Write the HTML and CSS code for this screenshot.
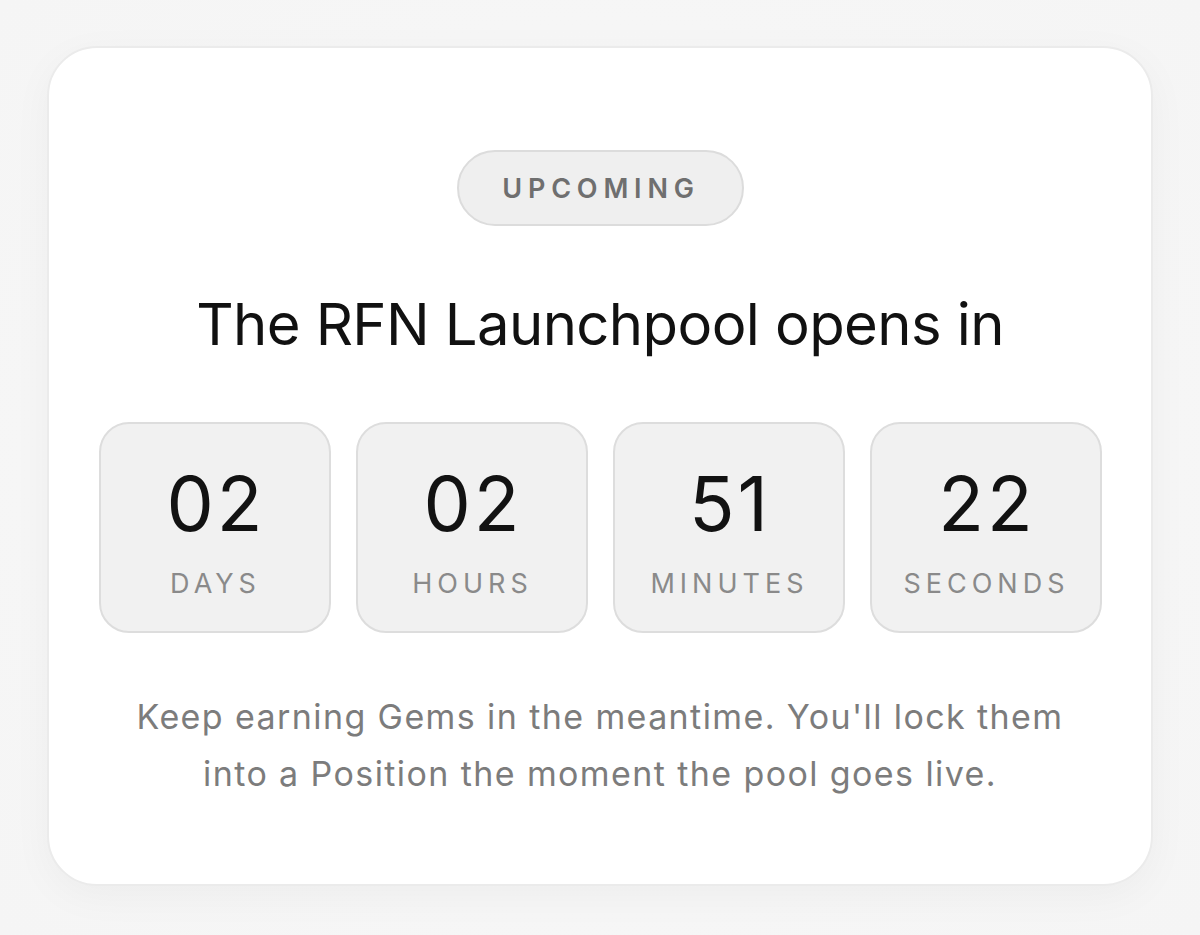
FILE: index.html
```html
<!DOCTYPE html>
<html lang="en">
<head>
<meta charset="utf-8">
<title>RFN Launchpool</title>
<link rel="stylesheet" href="styles.css">
</head>
<body>
<div class="page">
  <section class="card">
    <div class="badge">UPCOMING</div>
    <h1 class="title">The RFN Launchpool opens in</h1>
    <div class="countdown">
      <div class="unit"><div class="num">02</div><div class="label">DAYS</div></div>
      <div class="unit"><div class="num">02</div><div class="label">HOURS</div></div>
      <div class="unit"><div class="num">51</div><div class="label">MINUTES</div></div>
      <div class="unit"><div class="num">22</div><div class="label">SECONDS</div></div>
    </div>
    <p class="note">Keep earning Gems in the meantime. You'll lock them into a Position the moment the pool goes live.</p>
  </section>
</div>
</body>
</html>
```

FILE: styles.css
```css
html, body {
  margin: 0;
  padding: 0;
  background: #f6f6f6;
  font-family: "Inter", "Noto Sans", sans-serif;
}
.page {
  width: 1200px;
  height: 935px;
  padding: 46px 47px 0;
  box-sizing: border-box;
  background: radial-gradient(ellipse at 50% 50%, #f8f8f8 0%, #f5f5f5 100%);
}
.card {
  box-sizing: border-box;
  width: 1106px;
  height: 840px;
  background: #ffffff;
  border: 2px solid #ebebeb;
  border-radius: 50px;
  box-shadow: 0 10px 40px rgba(0,0,0,0.04);
  display: flex;
  flex-direction: column;
  align-items: center;
  padding: 102px 50px 0;
}
.badge {
  box-sizing: border-box;
  height: 76px;
  width: 287px;
  border-radius: 38px;
  background: #efefef;
  border: 2px solid #dcdcdc;
  color: #6f6f6f;
  font-weight: 600;
  font-size: 27px;
  letter-spacing: 5.8px;
  display: flex;
  align-items: center;
  justify-content: center;
  padding-left: 2px;
}
.title {
  margin: 62px 0 0;
  font-weight: 400;
  font-size: 58px;
  line-height: 72px;
  color: #111111;
  letter-spacing: -0.6px;
}
.countdown {
  margin-top: 62px;
  display: flex;
  gap: 25px;
}
.unit {
  box-sizing: border-box;
  width: 232px;
  height: 211px;
  background: #f1f1f1;
  border: 2px solid #dddddd;
  border-radius: 30px;
  display: flex;
  flex-direction: column;
  align-items: center;
  padding-top: 35px;
}
.num {
  font-size: 75px;
  line-height: 90px;
  color: #121212;
  font-weight: 400;
  letter-spacing: 3px;
  padding-left: 3px;
}
.label {
  margin-top: 19px;
  font-size: 27px;
  line-height: 32px;
  letter-spacing: 5px;
  padding-left: 2px;
  color: #8a8a8a;
}
.note {
  margin: 55px 0 0;
  width: 950px;
  text-align: center;
  font-size: 34px;
  line-height: 57px;
  letter-spacing: 1.4px;
  color: #7c7c7c;
}
```
